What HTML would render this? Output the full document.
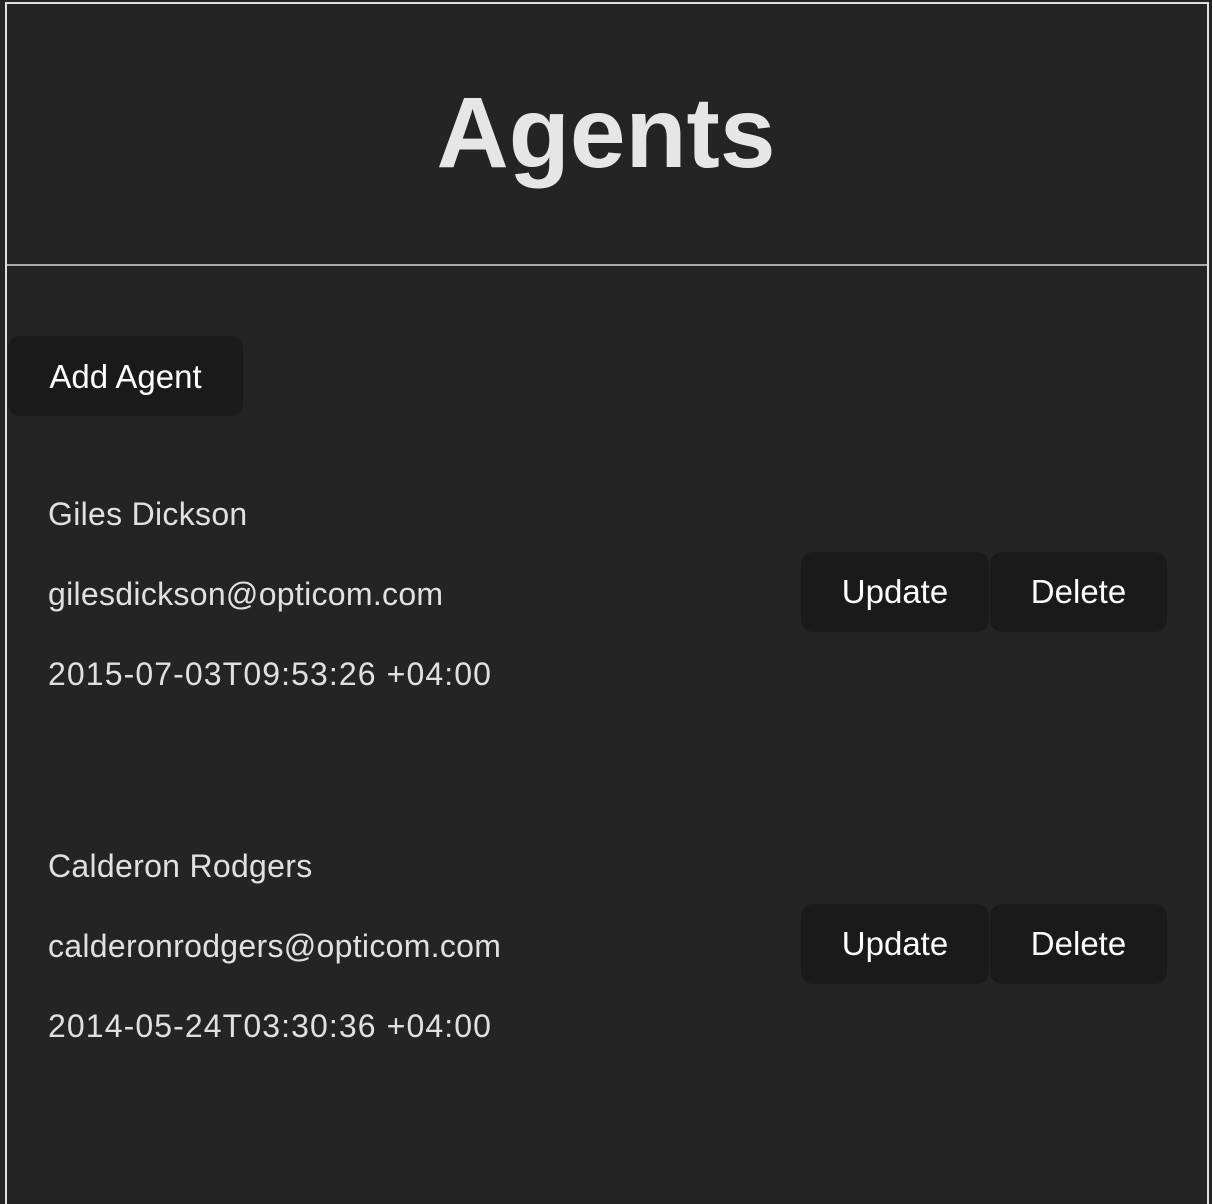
<!DOCTYPE html>
<html><head><meta charset="utf-8"><style>
html,body{margin:0;padding:0;background:#242424;width:1212px;height:1186px;overflow:hidden;font-family:"Liberation Sans",sans-serif;color:rgba(255,255,255,0.87)}
.frame{position:absolute;left:5px;top:2px;width:1200px;height:1200px;border:2px solid #e0e0e0;border-bottom:none}
.hr{position:absolute;left:7px;right:5px;top:264px;height:2px;background:#aaa}
h1{position:absolute;left:0;width:1212px;top:68px;margin:0;text-align:center;font-size:100px;font-weight:bold;line-height:130px;color:#e6e6e6}
.btn{position:absolute;background:#1a1a1a;border-radius:12px;color:#fff;font-size:33px;display:flex;align-items:center;justify-content:center;height:80px}
.t{position:absolute;left:48px;font-size:32px;line-height:36px;color:#e0e0e0;letter-spacing:0.3px}
.d{letter-spacing:1.1px}
</style></head><body>
<div class="frame"></div>
<h1>Agents</h1>
<div class="hr"></div>
<div class="btn" style="left:8px;top:336px;width:235px;padding-top:2px;box-sizing:border-box">Add Agent</div>
<div class="t" style="top:496px">Giles Dickson</div>
<div class="t" style="top:576px">gilesdickson@opticom.com</div>
<div class="t d" style="top:656px">2015-07-03T09:53:26 +04:00</div>
<div class="btn" style="left:801px;top:552px;width:188px">Update</div>
<div class="btn" style="left:990px;top:552px;width:177px">Delete</div>
<div class="t" style="top:848px">Calderon Rodgers</div>
<div class="t" style="top:928px">calderonrodgers@opticom.com</div>
<div class="t d" style="top:1008px">2014-05-24T03:30:36 +04:00</div>
<div class="btn" style="left:801px;top:904px;width:188px">Update</div>
<div class="btn" style="left:990px;top:904px;width:177px">Delete</div>
</body></html>
